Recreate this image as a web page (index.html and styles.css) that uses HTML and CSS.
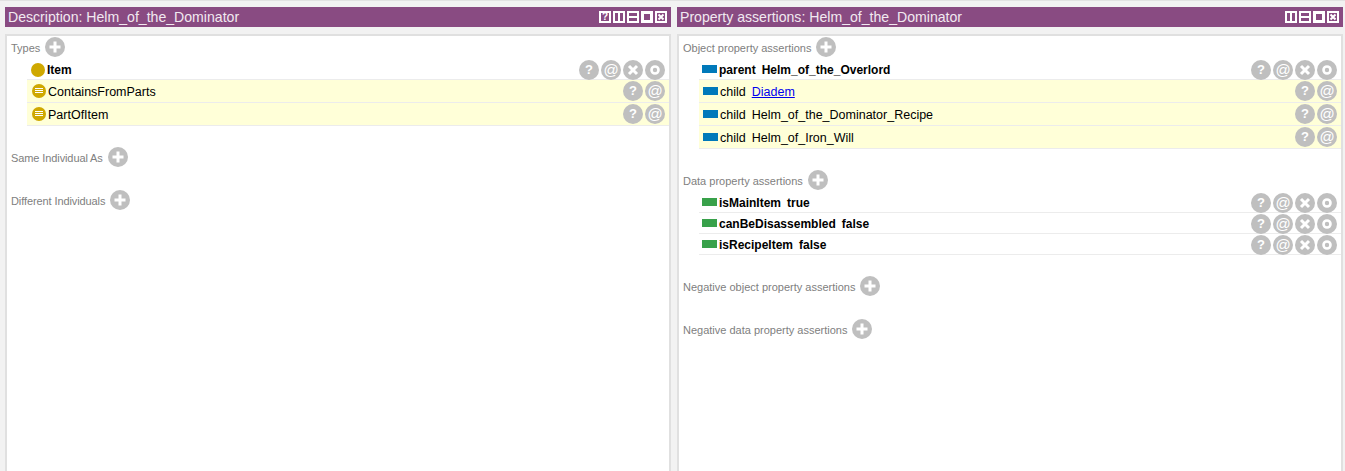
FILE: index.html
```html
<!DOCTYPE html>
<html lang="en">
<head>
    <meta charset="UTF-8">
    <title>Helm_of_the_Dominator</title>
    <link rel="stylesheet" href="styles.css">
</head>
<body>
    <svg class="defs" width="0" height="0">
        <symbol id="i-plus" viewBox="0 0 20 20"><path d="M10 4.500v11M4.500 10h11" stroke="#fff" stroke-width="3"/></symbol>
        <symbol id="i-x" viewBox="0 0 20 20"><path d="M6 6l8 8M14 6l-8 8" stroke="#fff" stroke-width="3"/></symbol>
        <symbol id="i-o" viewBox="0 0 20 20"><circle cx="10" cy="10" r="3.500" fill="none" stroke="#fff" stroke-width="2.600"/></symbol>
        <symbol id="v-split" viewBox="0 0 12 12"><path d="M0 0h12v12H0z" fill="#fff"/><path d="M5 2H2v8h3zM10 2H7v8h3z" fill="#894b82"/></symbol>
        <symbol id="v-hsplit" viewBox="0 0 12 12"><path d="M0 0h12v12H0z" fill="#fff"/><path d="M2 2h8v3H2zM2 7h8v3H2z" fill="#894b82"/></symbol>
        <symbol id="v-max" viewBox="0 0 12 12"><path d="M0 0h12v12H0z" fill="#fff"/><path d="M3 3h6v6H3z" fill="#894b82"/></symbol>
        <symbol id="v-close" viewBox="0 0 12 12"><path d="M0 0h12v12H0z" fill="#fff"/><path d="M2 2h8v8H2z" fill="#894b82"/><path d="M3.500 3.500l5 5M8.500 3.500l-5 5" stroke="#fff" stroke-width="2"/></symbol>
    </svg>

    <div class="workspace">
        <section class="view">
            <div class="view-title">
                <span>Description: Helm_of_the_Dominator</span>
                <div class="view-buttons">
                    <span class="view-help">?</span>
                    <svg><use href="#v-split"/></svg>
                    <svg><use href="#v-hsplit"/></svg>
                    <svg><use href="#v-max"/></svg>
                    <svg><use href="#v-close"/></svg>
                </div>
            </div>
            <div class="view-body">
                <div class="frame-section">
                    <div class="frame-header"><span>Types</span> <svg class="add"><use href="#i-plus"/></svg></div>
                    <div class="row">
                        <span class="class-dot"></span><b class="label">Item</b>
                        <div class="actions">
                            <span class="act">?</span><span class="act at">@</span>
                            <svg class="act"><use href="#i-x"/></svg><svg class="act"><use href="#i-o"/></svg>
                        </div>
                    </div>
                    <div class="row inferred">
                        <span class="class-dot lined"></span><span class="label">ContainsFromParts</span>
                        <div class="actions"><span class="act">?</span><span class="act at">@</span></div>
                    </div>
                    <div class="row inferred">
                        <span class="class-dot lined"></span><span class="label">PartOfItem</span>
                        <div class="actions"><span class="act">?</span><span class="act at">@</span></div>
                    </div>
                </div>
                <div class="frame-section">
                    <div class="frame-header"><span class="tight">Same Individual As</span> <svg class="add"><use href="#i-plus"/></svg></div>
                </div>
                <div class="frame-section">
                    <div class="frame-header"><span class="tight">Different Individuals</span> <svg class="add"><use href="#i-plus"/></svg></div>
                </div>
            </div>
        </section>

        <section class="view">
            <div class="view-title">
                <span>Property assertions: Helm_of_the_Dominator</span>
                <div class="view-buttons">
                    <svg><use href="#v-split"/></svg>
                    <svg><use href="#v-hsplit"/></svg>
                    <svg><use href="#v-max"/></svg>
                    <svg><use href="#v-close"/></svg>
                </div>
            </div>
            <div class="view-body">
                <div class="frame-section">
                    <div class="frame-header"><span>Object property assertions</span> <svg class="add"><use href="#i-plus"/></svg></div>
                    <div class="row prop">
                        <span class="bar blue"></span><b class="label">parent<i class="sp"></i>Helm_of_the_Overlord</b>
                        <div class="actions">
                            <span class="act">?</span><span class="act at">@</span>
                            <svg class="act"><use href="#i-x"/></svg><svg class="act"><use href="#i-o"/></svg>
                        </div>
                    </div>
                    <div class="row prop inferred">
                        <span class="bar blue"></span><span class="label">child<i class="sp"></i><a href="#">Diadem</a></span>
                        <div class="actions"><span class="act">?</span><span class="act at">@</span></div>
                    </div>
                    <div class="row prop inferred">
                        <span class="bar blue"></span><span class="label">child<i class="sp"></i>Helm_of_the_Dominator_Recipe</span>
                        <div class="actions"><span class="act">?</span><span class="act at">@</span></div>
                    </div>
                    <div class="row prop inferred">
                        <span class="bar blue"></span><span class="label">child<i class="sp"></i>Helm_of_Iron_Will</span>
                        <div class="actions"><span class="act">?</span><span class="act at">@</span></div>
                    </div>
                </div>
                <div class="frame-section">
                    <div class="frame-header"><span>Data property assertions</span> <svg class="add"><use href="#i-plus"/></svg></div>
                    <div class="row prop">
                        <span class="bar green"></span><b class="label">isMainItem<i class="sp"></i>true</b>
                        <div class="actions">
                            <span class="act">?</span><span class="act at">@</span>
                            <svg class="act"><use href="#i-x"/></svg><svg class="act"><use href="#i-o"/></svg>
                        </div>
                    </div>
                    <div class="row prop">
                        <span class="bar green"></span><b class="label">canBeDisassembled<i class="sp"></i>false</b>
                        <div class="actions">
                            <span class="act">?</span><span class="act at">@</span>
                            <svg class="act"><use href="#i-x"/></svg><svg class="act"><use href="#i-o"/></svg>
                        </div>
                    </div>
                    <div class="row prop">
                        <span class="bar green"></span><b class="label">isRecipeItem<i class="sp"></i>false</b>
                        <div class="actions">
                            <span class="act">?</span><span class="act at">@</span>
                            <svg class="act"><use href="#i-x"/></svg><svg class="act"><use href="#i-o"/></svg>
                        </div>
                    </div>
                </div>
                <div class="frame-section">
                    <div class="frame-header"><span>Negative object property assertions</span> <svg class="add"><use href="#i-plus"/></svg></div>
                </div>
                <div class="frame-section">
                    <div class="frame-header"><span>Negative data property assertions</span> <svg class="add"><use href="#i-plus"/></svg></div>
                </div>
            </div>
        </section>
    </div>
</body>
</html>
```

FILE: styles.css
```css
html, body {
    margin: 0;
    height: 471px;
    overflow: hidden;
}
body {
    background: #f2f2f2;
    border-top: 1px solid #e2e2e2;
    box-sizing: border-box;
    font-family: "Liberation Sans", Arial, sans-serif;
    color: #000;
}
.defs {
    position: absolute;
}
.workspace {
    display: grid;
    grid-template-columns: 666px 666px;
    column-gap: 6px;
    padding: 6px 2px 0 5px;
    height: 464px;
}
.view {
    display: flex;
    flex-direction: column;
}
.view-title {
    display: flex;
    align-items: center;
    justify-content: space-between;
    height: 20px;
    background: #894b82;
    color: #f1e9f0;
    font-size: 14.100px;
    padding: 0 4px 0 3px;
    flex-shrink: 0;
}
.view-buttons {
    display: flex;
    gap: 2px;
}
.view-buttons svg, .view-help {
    width: 12px;
    height: 12px;
    display: block;
}
.view-help {
    box-sizing: border-box;
    border: 2px solid #fff;
    color: #fff;
    font-size: 10px;
    font-weight: bold;
    line-height: 8px;
    text-align: center;
}
.view-body {
    flex: 1;
    margin-top: 7px;
    background: #fff;
    border: 2px solid #e0e0e0;
    border-bottom: 0;
    padding-top: 1px;
}
.frame-section {
    padding-bottom: 21px;
}
.frame-header {
    display: flex;
    align-items: center;
    gap: 5px;
    height: 20px;
    margin: 0 0 2px 4px;
    font-size: 11px;
    color: #808080;
}
.frame-header span {
    margin-top: 2px;
}
.frame-header .tight {
    letter-spacing: -0.100px;
}
.add {
    width: 20px;
    height: 20px;
    border-radius: 50%;
    background: #bfbfbf;
}
.row {
    display: flex;
    align-items: center;
    margin-left: 20px;
    padding: 1px 4px 0;
    box-shadow: inset 0 -1px 0 #ececec;
    font-size: 12.500px;
}
.row b {
    font-size: 12px;
}
.row.inferred {
    background: #ffffd8;
    padding: 1px 4px 2px 5px;
}
.row.inferred .label {
    margin-top: 2px;
}
.row.prop {
    padding-left: 3px;
}
.row.prop.inferred {
    padding-left: 4px;
}
.class-dot {
    width: 14px;
    height: 14px;
    border-radius: 50%;
    background: #cfa800;
    margin-right: 2px;
    flex-shrink: 0;
}
.class-dot.lined {
    background: linear-gradient(#fff, #fff) center 4px / 8px 1px no-repeat,
                linear-gradient(#fff, #fff) center 6px / 8px 1px no-repeat,
                linear-gradient(#fff, #fff) center 8px / 8px 1px no-repeat,
                #cfa800;
}
.bar {
    width: 15px;
    height: 8px;
    margin-right: 2px;
    margin-top: -2px;
    flex-shrink: 0;
}
.row.inferred .bar {
    margin-top: 0;
}
.bar.blue {
    background: #0079ba;
}
.bar.green {
    background: #38a14a;
}
.sp {
    display: inline-block;
    width: 6px;
}
.label a {
    color: #0000ee;
}
.actions {
    margin-left: auto;
    display: flex;
    gap: 2px;
}
.act {
    display: block;
    width: 20px;
    height: 20px;
    border-radius: 50%;
    background: #bfbfbf;
    color: #fff;
    font-size: 13px;
    font-weight: bold;
    line-height: 20px;
    text-align: center;
}
.act.at {
    font-size: 15px;
    font-weight: normal;
}
```
